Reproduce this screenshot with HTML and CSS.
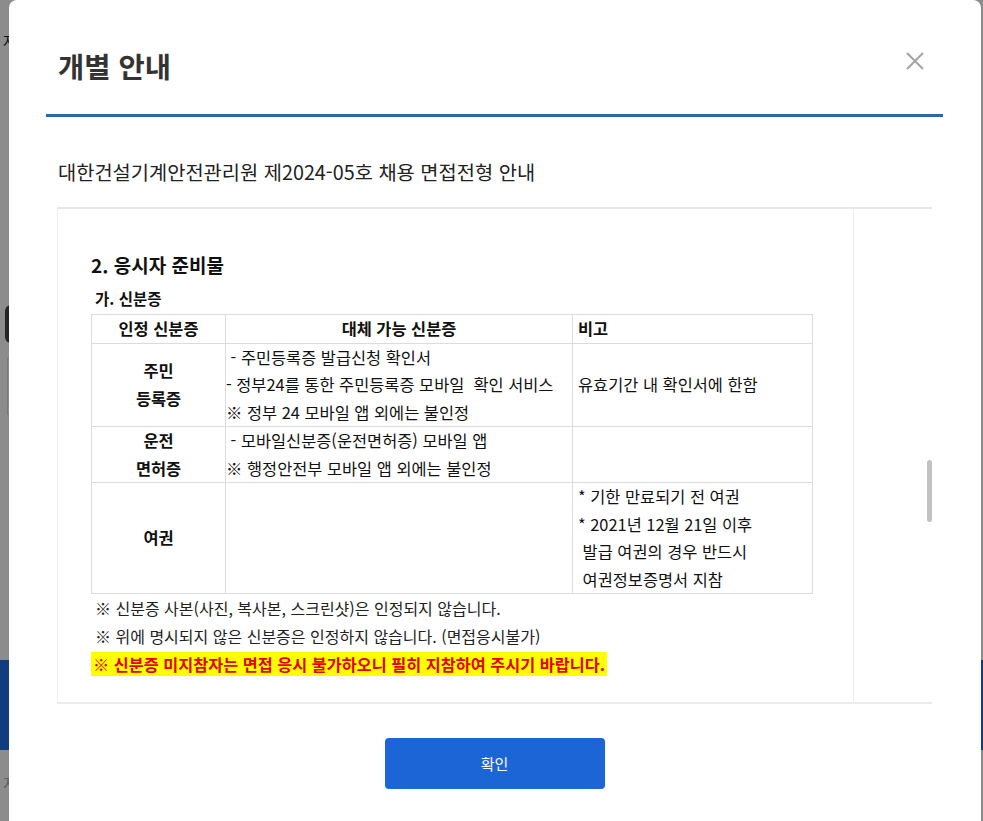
FILE: index.html
```html
<!DOCTYPE html>
<html lang="ko">
<head>
  <meta charset="UTF-8" />
  <meta name="viewport" content="width=device-width, initial-scale=1.0"/>
  <title>개별 안내</title>
  <link rel="stylesheet" href="styles.css">
</head>
<body>
<div class="page">
  <div class="page-mark">자</div>
  <div class="page-btn"></div>
  <div class="page-field"></div>
  <div class="page-band"></div>
  <div class="page-foot">지</div>
</div>
<div class="dim"></div>

<div class="modal">
  <div class="modal-head">
    <h2 class="modal-title">개별 안내</h2>
    <button class="close-btn" aria-label="닫기">
      <svg width="20" height="20" viewBox="0 0 20 20"><path d="M2 2 L18 18 M18 2 L2 18" stroke="#a3a3a3" stroke-width="2" fill="none"/></svg>
    </button>
  </div>

  <p class="subtitle">대한건설기계안전관리원 제2024-05호 채용 면접전형 안내</p>

  <div class="doc-frame">
    <div class="doc">
      <h3 class="doc-title">2. 응시자 준비물</h3>
      <h4 class="doc-sub">가. 신분증</h4>
      <table class="id-table">
        <colgroup>
          <col style="width:134px">
          <col style="width:347px">
          <col style="width:240px">
        </colgroup>
        <tr>
          <th>인정 신분증</th>
          <th>대체 가능 신분증</th>
          <th class="left">비고</th>
        </tr>
        <tr>
          <th>주민<br>등록증</th>
          <td>&nbsp;- 주민등록증 발급신청 확인서<br>- 정부24를 통한 주민등록증 모바일&nbsp; 확인 서비스<br>※ 정부 24 모바일 앱 외에는 불인정</td>
          <td class="memo">유효기간 내 확인서에 한함</td>
        </tr>
        <tr>
          <th>운전<br>면허증</th>
          <td>&nbsp;- 모바일신분증(운전면허증) 모바일 앱<br>※ 행정안전부 모바일 앱 외에는 불인정</td>
          <td class="memo"></td>
        </tr>
        <tr>
          <th>여권</th>
          <td></td>
          <td class="memo">* 기한 만료되기 전 여권<br>* 2021년 12월 21일 이후<br>&nbsp;발급 여권의 경우 반드시<br>&nbsp;여권정보증명서 지참</td>
        </tr>
      </table>
      <p class="note">※ 신분증 사본(사진, 복사본, 스크린샷)은 인정되지 않습니다.</p>
      <p class="note">※ 위에 명시되지 않은 신분증은 인정하지 않습니다. (면접응시불가)</p>
      <p class="note note-alert"><span>※ 신분증 미지참자는 면접 응시 불가하오니 필히 지참하여 주시기 바랍니다.</span></p>
    </div>
    <div class="scroll">
      <div class="scroll-thumb"></div>
    </div>
  </div>

  <div class="modal-foot">
    <button class="btn-ok">확인</button>
  </div>
</div>
</body>
</html>
```

FILE: styles.css
```css
* { box-sizing: border-box; }
html, body { height: 100%; }
body {
  margin: 0;
  font-family: "Noto Sans CJK KR", "Noto Sans", sans-serif;
  background: #fff;
  color: #222;
  overflow: hidden;
}

/* page behind the dialog */
.page { padding-left: 3px; }
.page-mark {
  height: 300px;
  padding-top: 30px;
  font-size: 15px;
  color: #222;
}
.page-btn {
  width: 80px;
  height: 38px;
  margin: 5px 0 0 2px;
  background: #444;
  border-radius: 6px;
}
.page-field {
  width: 200px;
  height: 57px;
  margin: 15px 0 0 4px;
  border: 1px solid #ddd;
}
.page-band {
  height: 90px;
  margin: 245px 0 0 -3px;
  background: #1c6fe6;
}
.page-foot {
  margin-top: 22px;
  font-size: 15px;
  color: #aaa;
}
.dim {
  position: fixed;
  inset: 0;
  background: rgba(0,0,0,0.45);
}

/* dialog */
.modal {
  position: absolute;
  top: 0;
  left: 9px;
  width: 972px;
  height: 840px;
  padding: 0 38px 0 37px;
  background: #fff;
  border-radius: 8px 8px 0 0;
}
.modal-head {
  display: flex;
  align-items: center;
  justify-content: space-between;
  height: 117px;
  padding: 16px 18px 0 12px;
  border-bottom: 3px solid #2b67b4;
}
.modal-title {
  margin: 0;
  font-size: 28.5px;
  font-weight: 700;
  color: #333;
}
.close-btn {
  margin-bottom: 8px;
  padding: 0;
  border: none;
  background: none;
  line-height: 0;
  cursor: pointer;
}
.subtitle {
  margin: 42px 0 0 12px;
  font-size: 19.8px;
  line-height: 26px;
  color: #222;
}

.doc-frame {
  display: flex;
  height: 497px;
  margin: 22px 11px 0;
  border-top: 2px solid #e6e6e6;
  border-bottom: 2px solid #ebebeb;
  border-left: 1px solid #eee;
  overflow: hidden;
}
.doc {
  width: 796px;
  flex-shrink: 0;
  padding: 42px 0 0 33px;
  border-right: 1px solid #eee;
}
.scroll {
  flex: 1;
  display: flex;
  justify-content: flex-end;
  padding-top: 251px;
}
.scroll-thumb {
  width: 5px;
  height: 62px;
  background: #c2c2c2;
  border-radius: 3px;
}

.doc-title {
  margin: 0;
  font-size: 19px;
  line-height: 28px;
  font-weight: 700;
  color: #111;
}
.doc-sub {
  margin: 8px 0 0 4px;
  font-size: 15.5px;
  line-height: 22px;
  font-weight: 700;
  color: #111;
}
.id-table {
  width: 721px;
  margin-top: 5px;
  border-collapse: collapse;
  table-layout: fixed;
  font-size: 16.4px;
  line-height: 27.5px;
  color: #111;
}
.id-table th, .id-table td {
  padding: 0;
  border: 1px solid #dcdcdc;
  vertical-align: middle;
}
.id-table th { text-align: center; font-weight: 700; }
.id-table td { text-align: left; }
.id-table .left { text-align: left; padding-left: 5px; }
.id-table .memo { padding-left: 5px; }

.note {
  margin: 0;
  padding-left: 4px;
  font-size: 16px;
  line-height: 28px;
  color: #222;
}
.note-alert { padding-left: 0; }
.note-alert span {
  padding: 0 2px;
  background: #ffff00;
  color: #e50000;
  font-size: 16.3px;
  font-weight: 700;
}

.modal-foot {
  display: flex;
  justify-content: center;
  padding-top: 34px;
}
.btn-ok {
  width: 220px;
  height: 51px;
  border: none;
  border-radius: 4px;
  background: #1b65d6;
  color: #fff;
  font-family: inherit;
  font-size: 15px;
  cursor: pointer;
}
```
